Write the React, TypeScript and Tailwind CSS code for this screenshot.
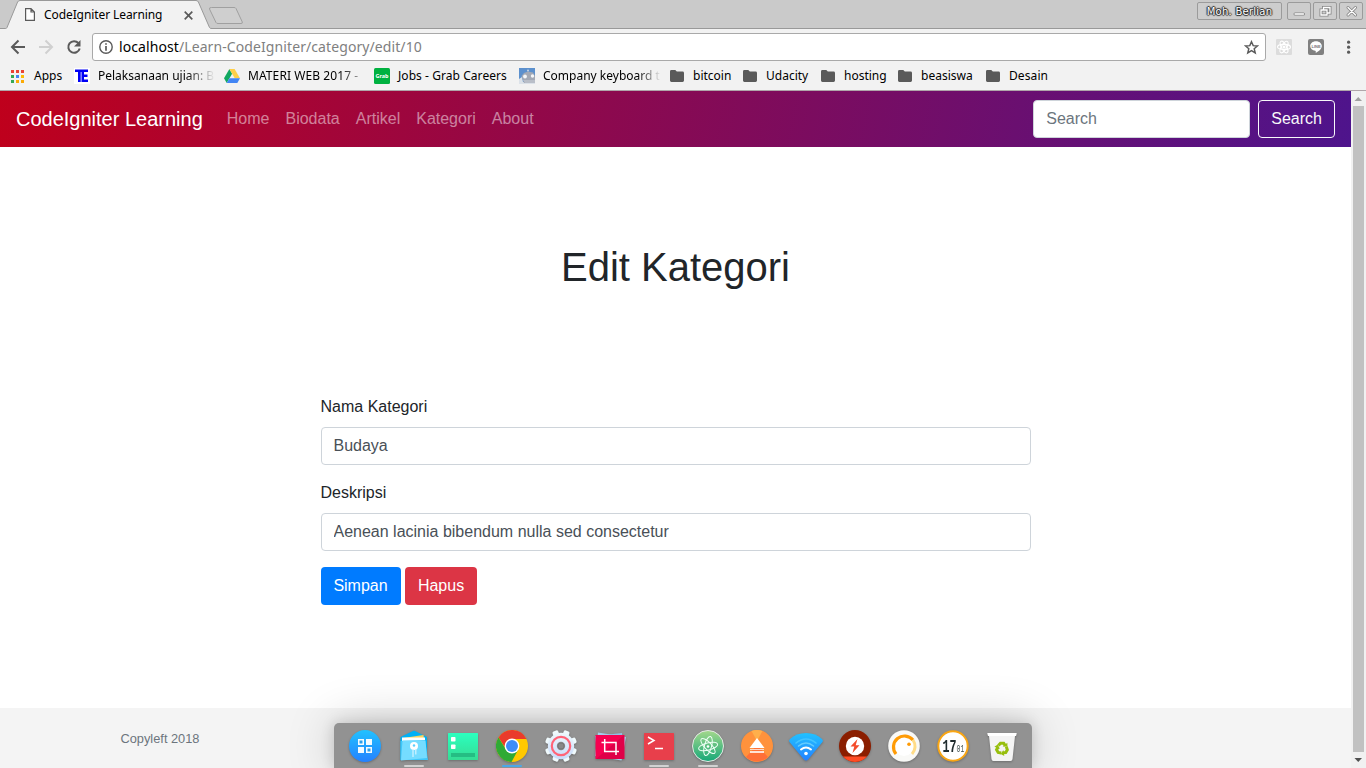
import React from "react";

type IconProps = { children: React.ReactNode };

const Glyph = ({ children }: IconProps) => (
  <svg width="36" height="36" viewBox="0 0 36 36" className="drop-shadow-[0_1px_1px_rgba(0,0,0,0.25)]">
    {children}
  </svg>
);

const Folder = () => (
  <svg width="14" height="12" viewBox="0 0 14 12" className="ml-[1px]">
    <path d="M1.4 0H5.3L6.8 1.6H12.6Q14 1.6 14 3V10.6Q14 12 12.6 12H1.4Q0 12 0 10.6V1.4Q0 0 1.4 0Z" fill="#5a5a5a" />
  </svg>
);

const AppsGrid = () => {
  const colors = ["#ea4335", "#ea4335", "#ea4335", "#34a853", "#4285f4", "#fbbc05", "#34a853", "#fbaa05", "#fbaa05"];
  return (
    <svg width="13" height="13" viewBox="0 0 13 13" className="ml-[1px]">
      {colors.map((c, i) => (
        <rect key={i} x={(i % 3) * 5} y={Math.floor(i / 3) * 5} width="3" height="3" fill={c} />
      ))}
    </svg>
  );
};

const TeLogo = () => (
  <svg width="16" height="16" viewBox="0 0 16 16">
    <rect width="16" height="16" fill="#fff" />
    <path d="M1 1.500H14V4H10V6.500H13.500V9H10V11.500H14V14H7.500V4H6.700V14H4V4H1Z" fill="#0000f5" />
  </svg>
);

const DriveLogo = () => (
  <svg width="16" height="14" viewBox="0 0 16 14">
    <path d="M5.4 0L0 9.3L2.7 14L8.1 4.7Z" fill="#11a861" />
    <path d="M5.4 0H10.6L16 9.3H10.7Z" fill="#ffcf48" />
    <path d="M5.4 9.3H16L13.3 14H2.7Z" fill="#4285f4" />
  </svg>
);

const GrabLogo = () => (
  <svg width="16" height="16" viewBox="0 0 16 16">
    <rect width="16" height="16" rx="1.5" fill="#00b140" />
    <text x="8" y="9.7" textAnchor="middle" fontSize="5.5" fontWeight="700" fill="#fff" fontFamily="Noto Sans, sans-serif">Grab</text>
  </svg>
);

const KeyboardLogo = () => (
  <svg width="16" height="16" viewBox="0 0 16 16">
    <rect width="16" height="16" fill="#5c90cd" />
    <path d="M0 11L3 9L4 14L16 12V16H0Z" fill="#dce2e9" />
    <path d="M2.500 8L5 5L9 3.500L14 4.500L16 8V13L11 15H5Z" fill="#a3a9b5" />
    <path d="M4 12H16V15H6Z" fill="#b9bec8" />
    <circle cx="6" cy="8.500" r="1.900" fill="#f4f6f8" />
    <circle cx="13.500" cy="8" r="1.700" fill="#f4f6f8" />
    <circle cx="9" cy="2.500" r="1" fill="#c7d3e3" />
  </svg>
);

const bookmarks = [
  { label: "Apps", icon: <AppsGrid />, cell: "w-16", fade: "" },
  { label: "Pelaksanaan ujian: B", icon: <TeLogo />, cell: "w-[150px]", fade: "w-[117px] bg-linear-to-r from-black from-75% to-transparent bg-clip-text text-transparent" },
  { label: "MATERI WEB 2017 -", icon: <DriveLogo />, cell: "w-[150px]", fade: "w-[114px] tracking-[0.08px] bg-linear-to-r from-black from-80% to-black/25 bg-clip-text text-transparent" },
  { label: "Jobs - Grab Careers", icon: <GrabLogo />, cell: "w-[145px]", fade: "tracking-[0.06px]" },
  { label: "Company keyboard t", icon: <KeyboardLogo />, cell: "w-[150px]", fade: "w-[118px] bg-linear-to-r from-black from-80% to-transparent bg-clip-text text-transparent" },
  { label: "bitcoin", icon: <Folder />, cell: "w-[73px]", fade: "" },
  { label: "Udacity", icon: <Folder />, cell: "w-[78px]", fade: "" },
  { label: "hosting", icon: <Folder />, cell: "w-[77px]", fade: "" },
  { label: "beasiswa", icon: <Folder />, cell: "w-[88px]", fade: "" },
  { label: "Desain", icon: <Folder />, cell: "w-[80px]", fade: "tracking-[0.1px]" },
];

const TitleBar = () => (
  <div className="flex h-[29px] bg-[#cacaca] shadow-[inset_0_-1px_0_#999]">
    <div className="relative h-[29px] w-[212px] shrink-0">
      <svg width="246" height="29" viewBox="0 0 246 29" className="absolute left-0 top-0">
        <path d="M0 28.5H5.5Q6.5 28.5 7 27.5L17.6 2Q18.4 .5 20 .5H196Q197.6 .5 198.4 2L209.5 27.5Q210 28.5 211 28.5L212 29H0Z" fill="#f2f2f2" />
        <path d="M0 28.5H5.5Q6.5 28.5 7 27.5L17.6 2Q18.4 .5 20 .5H196Q197.6 .5 198.4 2L209.5 27.5Q210 28.5 212 28.5" fill="none" stroke="#999" />
        <path d="M7 28.500H210" stroke="#f2f2f2" strokeWidth="1" />
        <path d="M211.500 7.500H234Q235.500 7.500 236 8.500L242.300 22Q242.800 23.500 241 23.500H218Q216.500 23.500 216 22.500L209.500 9Q209 7.500 211.500 7.500Z" fill="#cfcfcf" stroke="#a0a0a0" />
      </svg>
      <div className="relative flex h-[29px] items-center pl-[25px]">
        <svg width="10" height="13" viewBox="0 0 10 13">
          <path d="M.6 .6H6L9.400 4V12.400H.6ZM6 .6V4H9.400" fill="#fff" stroke="#5a5a5a" strokeWidth="1.200" />
        </svg>
        <span className="ml-[9px] w-[140px] text-xs tracking-[-0.09px] text-black">CodeIgniter Learning</span>
        <svg width="9" height="9" viewBox="0 0 9 9" className="mt-px">
          <path d="M.7 .7L8.300 8.300M8.300 .7L.7 8.300" stroke="#5a5a5a" strokeWidth="1.700" />
        </svg>
      </div>
    </div>
    <div className="ml-auto flex gap-[5px] pr-[3px] pt-[2px]">
      <div className="flex h-[18px] w-[85px] items-center justify-center rounded-[2px] border border-[#9b9b9b] bg-[#cdcdcd] font-['DejaVu_Sans'] text-[10px] tracking-[0.25px] text-white [text-shadow:0_1px_1px_#222,0_-1px_1px_#222,1px_0_1px_#222,-1px_0_1px_#222]">
        Moh. Berlian
      </div>
      <div className="flex gap-[2px]">
        {[
          <path key="min" d="M8 12H16.500" />,
          <path key="max" d="M8 8H14V13H8ZM10.500 8V5.500H17V11H14" />,
          <path key="close" d="M9 5.500L16.500 13M16.500 5.500L9 13" />,
        ].map((shape, i) => (
          <div key={i} className="h-[18px] w-6 rounded-[2px] border border-[#9b9b9b] bg-[#cdcdcd]">
            <svg width="22" height="16" viewBox="1 1 22 16" fill="none">
              <g stroke="#858585" strokeWidth="3" strokeLinecap="round">{shape}</g>
              <g stroke="#fff" strokeWidth="1.300" strokeLinecap="round">{shape}</g>
            </svg>
          </div>
        ))}
      </div>
    </div>
  </div>
);

const Toolbar = () => (
  <div className="flex h-[36px] items-center">
    <svg width="92" height="34" viewBox="0 0 92 34" fill="none" strokeWidth="2">
      <path d="M25 17H12.500M18.500 10.500L12 17L18.500 23.500" stroke="#5a5a5a" />
      <path d="M39 17H51.500M45.500 10.500L52 17L45.500 23.500" stroke="#d0d0d0" />
      <path d="M78.500 13.200A5.800 5.800 0 1 0 79.700 18.500" stroke="#5a5a5a" />
      <path d="M80.500 10V16.500H74Z" fill="#5a5a5a" />
    </svg>
    <div className="flex h-7 w-[1174px] items-center rounded-[3px] border border-[#a9a9a9] bg-white pl-[6px] pr-[6px]">
      <svg width="14" height="14" viewBox="0 0 14 14" fill="none" stroke="#5a5a5a" strokeWidth="1.400">
        <circle cx="7" cy="7" r="6.200" />
        <path d="M7 6V10.800M7 3.200V4.800" strokeWidth="1.700" />
      </svg>
      <span className="ml-[6px] text-[14px] leading-5 tracking-[0.09px] text-[#808080]">
        <span className="text-black">localhost</span>/Learn-CodeIgniter/category/edit/10
      </span>
      <svg width="15" height="15" viewBox="0 0 24 24" className="ml-auto" fill="none" stroke="#5a5a5a" strokeWidth="2.300">
        <path d="M12 2.700L14.700 9L21.500 9.500L16.300 13.900L18 20.700L12 17L6 20.700L7.700 13.900L2.500 9.500L9.300 9Z" />
      </svg>
    </div>
    <svg width="16" height="16" viewBox="0 0 16 16" className="ml-[10px]" fill="none">
      <rect width="16" height="16" rx="1" fill="#dcdcdc" />
      <g stroke="#fff" strokeWidth="1.100">
        <ellipse cx="8" cy="8" rx="6.500" ry="2.600" />
        <ellipse cx="8" cy="8" rx="6.500" ry="2.600" transform="rotate(60 8 8)" />
        <ellipse cx="8" cy="8" rx="6.500" ry="2.600" transform="rotate(120 8 8)" />
      </g>
      <circle cx="8" cy="8" r="1.500" fill="#fff" />
    </svg>
    <svg width="16" height="16" viewBox="0 0 16 16" className="ml-4">
      <rect width="16" height="16" rx="2" fill="#808080" />
      <path d="M8 2.200C4.500 2.200 2.200 4.400 2.200 7C2.200 9.500 4.400 11.300 7.300 11.700Q8.200 12 7.700 14C11 12.200 13.800 10 13.800 7C13.800 4.400 11.400 2.200 8 2.200Z" fill="#fff" />
      <text x="8" y="8.700" fontSize="4" fontWeight="700" textAnchor="middle" fill="#777" fontFamily="Liberation Sans, sans-serif">LINE</text>
    </svg>
    <svg width="4" height="14" viewBox="0 0 4 14" className="ml-[23px]" fill="#5a5a5a">
      <circle cx="1.600" cy="2.200" r="1.600" />
      <circle cx="1.600" cy="7.200" r="1.600" />
      <circle cx="1.600" cy="12.200" r="1.600" />
    </svg>
  </div>
);

const BookmarksBar = () => (
  <div className="flex h-[26px] items-center border-b border-[#b0a6aa] pb-[3px] pl-[10px] text-xs text-black">
    {bookmarks.map((b) => (
      <div key={b.label} className={`flex shrink-0 items-center ${b.cell}`}>
        <span className="flex w-4 shrink-0">{b.icon}</span>
        <span className={`ml-2 whitespace-nowrap ${b.fade}`}>{b.label}</span>
      </div>
    ))}
  </div>
);

const Navbar = () => (
  <nav className="flex h-14 shrink-0 items-center bg-linear-[100deg] from-[#bf001c] to-[#4e148c] px-4">
    <span className="mr-4 text-xl leading-[30px] text-white">CodeIgniter Learning</span>
    <div className="flex text-white/50">
      {["Home", "Biodata", "Artikel", "Kategori", "About"].map((item) => (
        <a key={item} className="px-2">{item}</a>
      ))}
    </div>
    <div className="ml-auto flex gap-2">
      <input
        placeholder="Search"
        className="h-[38px] w-[217px] rounded border border-[#ced4da] bg-white px-3 placeholder:text-[#6c757d]"
      />
      <button className="h-[38px] rounded border border-[#f8f9fa] px-3 text-[#f8f9fa]">Search</button>
    </div>
  </nav>
);

const fieldClass = "mt-2 block h-[38px] w-full rounded border border-[#ced4da] bg-white px-3 text-[#495057]";

const EditForm = () => (
  <form className="mx-auto mt-[104px] w-[710px]">
    <label className="block">
      Nama Kategori
      <input className={fieldClass} defaultValue="Budaya" />
    </label>
    <label className="mt-4 block">
      Deskripsi
      <input className={fieldClass} defaultValue="Aenean lacinia bibendum nulla sed consectetur" />
    </label>
    <div className="mt-4 flex gap-1 text-white">
      <button type="button" className="h-[38px] w-20 rounded bg-[#007bff]">Simpan</button>
      <button type="button" className="h-[38px] w-[72px] rounded bg-[#dc3545] pl-px">Hapus</button>
    </div>
  </form>
);

const gearTeeth = [0, 45, 90, 135, 180, 225, 270, 315];

const dockItems = [
  {
    name: "launcher",
    bar: "",
    icon: (
      <Glyph>
        <circle cx="18" cy="18" r="16" fill="url(#blueFill)" />
        <g fill="#f4fbff">
          <path d="M11 11H17V17H11ZM19 11H25V17H19ZM11 19H17V25H11ZM19 19H25V25H19Z" />
        </g>
        <path d="M12.500 12.500H15.500V15.500H12.500ZM20.500 20.500H23.500V23.500H20.500Z" fill="#2f9fe8" />
      </Glyph>
    ),
  },
  {
    name: "files",
    bar: "bg-[#d2d2d2]",
    icon: (
      <Glyph>
        <path d="M4.500 9L17 3Q18 2.500 19 3L31 9V32H4.500Z" fill="#00b0f5" />
        <path d="M7 10L27.500 7L29 20H7Z" fill="#ffd45a" />
        <path d="M6 9.500H29V18H6Z" fill="#fff" />
        <path d="M4.500 13L29 12L32 32H4.500Z" fill="#3fc7fa" />
        <path d="M6.500 12.500H29.500L31 30L5 32.500Z" fill="#75dcff" />
        <circle cx="18" cy="18" r="4" fill="#fff" />
        <circle cx="18" cy="17.500" r="1.200" fill="#59cfff" />
        <path d="M17 21V29M19.800 21V26.500" stroke="#d4f4ff" strokeWidth="1.200" />
      </Glyph>
    ),
  },
  {
    name: "tasks",
    bar: "",
    icon: (
      <Glyph>
        <rect x="3" y="5" width="30" height="27" rx=".5" fill="url(#mintFill)" />
        <rect x="6" y="9" width="4.500" height="4.500" rx=".7" fill="#fff" />
        <rect x="6" y="16.500" width="4.500" height="4.500" rx=".7" fill="#fff" />
        <rect x="6" y="25" width="24" height="4" fill="#25bd83" />
      </Glyph>
    ),
  },
  {
    name: "chrome",
    bar: "bg-[#4aa8e8]",
    icon: (
      <Glyph>
        <circle cx="18" cy="18" r="16" fill="#ffc900" />
        <path d="M4.500 9.500A16 16 0 0 1 32.500 11H18L11.500 20Z" fill="#ea3b2b" />
        <path d="M4.500 9.500A16 16 0 0 0 17.500 34L24 22L12 21.500Z" fill="#2faa35" />
        <circle cx="18" cy="18" r="7.400" fill="#fff" />
        <circle cx="18" cy="18" r="6" fill="#3d8df8" />
      </Glyph>
    ),
  },
  {
    name: "settings",
    bar: "",
    icon: (
      <Glyph>
        <g fill="url(#paleFill)">
          {gearTeeth.map((a) => (
            <rect key={a} x="15" y="1.800" width="6" height="10" rx="1.600" transform={`rotate(${a + 22.5} 18 18)`} />
          ))}
          <circle cx="18" cy="18" r="13.200" />
        </g>
        <circle cx="18" cy="18" r="9.200" fill="none" stroke="#ff6478" strokeWidth="2.200" />
        <circle cx="18" cy="18" r="4.200" fill="#888" />
        <circle cx="18" cy="18" r="3" fill="none" stroke="#777" />
      </Glyph>
    ),
  },
  {
    name: "screenshot",
    bar: "",
    icon: (
      <Glyph>
        <path d="M6 4.500L34 9L29.500 32.500L3 28Z" fill="#a5cdec" />
        <path d="M3 8L30 5L32 29L6 31Z" fill="#91c0e5" />
        <rect x="3.500" y="7" width="29" height="24" fill="#f70050" />
        <path d="M4 31L32 7V31Z" fill="#df0048" />
        <path d="M12.700 11V23.500H27M9.500 14.500H24V27" fill="none" stroke="#fff" strokeWidth="1.500" />
      </Glyph>
    ),
  },
  {
    name: "terminal",
    bar: "bg-[#d2d2d2]",
    icon: (
      <Glyph>
        <rect x="3" y="5" width="30" height="27" rx=".5" fill="#e83f4b" />
        <path d="M7 9L13 12.500L7 16M14 20.500H22" fill="none" stroke="#fff" strokeWidth="1.500" />
      </Glyph>
    ),
  },
  {
    name: "atom",
    bar: "bg-[#d2d2d2]",
    icon: (
      <Glyph>
        <circle cx="18" cy="18" r="15.500" fill="url(#atomFill)" stroke="#e6e9e7" />
        <g fill="none" stroke="#effff6" strokeWidth="1">
          <ellipse cx="18" cy="18.500" rx="9.800" ry="3.600" transform="rotate(-14 18 18)" />
          <ellipse cx="18" cy="18" rx="9.800" ry="3.600" transform="rotate(47 18 18)" />
          <ellipse cx="18" cy="18" rx="9.800" ry="3.600" transform="rotate(105 18 18)" />
        </g>
        <circle cx="18" cy="18.500" r="1.300" fill="#fff" />
      </Glyph>
    ),
  },
  {
    name: "eject",
    bar: "",
    icon: (
      <Glyph>
        <circle cx="18" cy="18" r="16" fill="#ff923c" />
        <path d="M18 17L29 29A16 16 0 0 1 7 29Z" fill="#ff6f38" />
        <path d="M12.500 3A16 16 0 0 1 23.500 3L18 13Z" fill="#ffaf4b" />
        <path d="M18 10L25.500 20H10.500Z" fill="#fff" />
        <path d="M11 21.500H25" stroke="#ffd9c8" />
        <path d="M11 24H25" stroke="#fff" strokeWidth="1.600" />
      </Glyph>
    ),
  },
  {
    name: "wifi",
    bar: "",
    icon: (
      <Glyph>
        <path d="M1.500 14Q.5 12.500 2 11Q8 5 18 5Q28 5 34 11Q35.500 12.500 34.500 14L20.500 31Q18 34 15.500 31Z" fill="url(#blueFill)" />
        <g fill="none" strokeWidth="1.600" strokeLinecap="round">
          <path d="M8 15Q18 7 28 15" stroke="#44c4ff" />
          <path d="M10.500 18Q18 12 25.500 18" stroke="#62ccff" />
          <path d="M13 21.500Q18 17.500 23 21.500" stroke="#fff" strokeWidth="2" />
        </g>
        <circle cx="18" cy="25.500" r="1.800" fill="#fff" />
      </Glyph>
    ),
  },
  {
    name: "power",
    bar: "",
    icon: (
      <Glyph>
        <circle cx="18" cy="18" r="16" fill="#8b1e00" />
        <path d="M6 28.500H30A16 16 0 0 1 6 28.500Z" fill="#ff4c24" />
        <circle cx="18" cy="18" r="9.200" fill="#fff" />
        <path d="M20.500 11L13.500 18.500H17.300L15.500 25L22.500 17.300H18.700Z" fill="#f44b2a" />
      </Glyph>
    ),
  },
  {
    name: "dial",
    bar: "",
    icon: (
      <Glyph>
        <circle cx="18" cy="18" r="15.800" fill="#f9f9f7" />
        <circle cx="18" cy="18" r="10" fill="#fff" />
        <path d="M10 26A11 11 0 1 1 27 12" fill="none" stroke="#ff9b05" strokeWidth="3.200" />
        <path d="M27 12A11 11 0 0 1 26 26" fill="none" stroke="#ffdc87" strokeWidth="3" />
        <circle cx="23" cy="16.200" r="1.800" fill="#ff9b05" />
      </Glyph>
    ),
  },
  {
    name: "clock",
    bar: "",
    icon: (
      <Glyph>
        <circle cx="18" cy="18" r="14.700" fill="#fff" stroke="#faa613" strokeWidth="2" />
        <text transform="translate(7.500 24) scale(.65 1)" fontSize="18" fontWeight="700" fill="#202c2e" fontFamily="Liberation Mono, monospace">
          17<tspan fontSize="10" fontWeight="400" dx="0" fill="#405050">01</tspan>
        </text>
      </Glyph>
    ),
  },
  {
    name: "trash",
    bar: "",
    icon: (
      <Glyph>
        <path d="M3.500 5H32.500L32 8H31L28.500 31Q28.300 33 26.500 33H9.500Q7.700 33 7.500 31L5 8H4Z" fill="#f4f4f4" />
        <path d="M3.500 5H32.500L32 8H4Z" fill="#fff" />
        <g fill="none" stroke="#97bf0d" strokeWidth="3">
          {[0, 120, 240].map((a) => (
            <path key={a} d="M14.400 17.600L16.500 15.200H19.700L21.200 17.600" transform={`rotate(${a} 18 20.500)`} />
          ))}
        </g>
        <g fill="#97bf0d">
          {[0, 120, 240].map((a) => (
            <path key={a} d="M18.700 18.500L23.500 18.800L23.300 14.800Z" transform={`rotate(${a} 18 20.500)`} />
          ))}
        </g>
      </Glyph>
    ),
  },
];

const Gradients = () => (
  <svg width="0" height="0" className="absolute">
    <defs>
      <linearGradient id="blueFill" x2="0" y2="1">
        <stop stopColor="#22c2ff" />
        <stop offset="1" stopColor="#2481ff" />
      </linearGradient>
      <linearGradient id="mintFill" x2="0" y2="1">
        <stop stopColor="#2bffbf" />
        <stop offset="1" stopColor="#36dc94" />
      </linearGradient>
      <linearGradient id="paleFill" gradientUnits="userSpaceOnUse" x1="18" y1="2" x2="18" y2="34">
        <stop stopColor="#f1fbfc" />
        <stop offset="1" stopColor="#c4d8fb" />
      </linearGradient>
      <linearGradient id="atomFill" x2="0" y2="1">
        <stop stopColor="#a4d88c" />
        <stop offset="1" stopColor="#16a878" />
      </linearGradient>
    </defs>
  </svg>
);

const Dock = () => (
  <div className="absolute bottom-0 left-[334px] flex h-[45px] w-[698px] rounded-t-[5px] bg-[#929292] pl-[6px] shadow-[0_0_14px_rgba(0,0,0,0.16),0_0_50px_rgba(0,0,0,0.20)]">
    <Gradients />
    {dockItems.map((item) => (
      <div key={item.name} className="flex w-[49px] shrink-0 flex-col items-center pt-[5px]">
        {item.icon}
        <span className={`mt-[1px] h-[2px] w-5 rounded-full ${item.bar}`} />
      </div>
    ))}
  </div>
);

const ScrollBar = () => (
  <div className="flex w-[15px] shrink-0 flex-col items-center bg-[#f1f1f1]">
    <svg width="15" height="15" viewBox="0 0 15 15" className="shrink-0">
      <path d="M3.500 10H11L7.250 6Z" fill="#a0a0a0" />
    </svg>
    <div className="w-[11px] flex-1 bg-[#c1c1c1]" />
    <svg width="15" height="16" viewBox="0 0 15 16" className="shrink-0">
      <path d="M3.500 6H11L7.250 10Z" fill="#505050" />
    </svg>
  </div>
);

export default function App() {
  return (
    <div className="relative flex h-[768px] w-[1366px] flex-col overflow-hidden bg-white">
      <header className="h-[91px] shrink-0 bg-[#f2f2f2] font-['Noto_Sans',sans-serif]">
        <TitleBar />
        <Toolbar />
        <BookmarksBar />
      </header>
      <div className="flex min-h-0 flex-1">
        <div className="flex flex-1 flex-col font-['Liberation_Sans',Arial,sans-serif] text-base leading-6 text-[#212529]">
          <Navbar />
          <main className="flex-1">
            <h1 className="mt-24 text-center text-[40px] font-normal leading-[48px]">Edit Kategori</h1>
            <EditForm />
          </main>
          <footer className="h-[60px] shrink-0 bg-[#f4f4f4] pl-[120.500px] text-[12.800px] leading-[62px] text-[#6c757d]">Copyleft 2018</footer>
        </div>
        <ScrollBar />
      </div>
      <Dock />
    </div>
  );
}
